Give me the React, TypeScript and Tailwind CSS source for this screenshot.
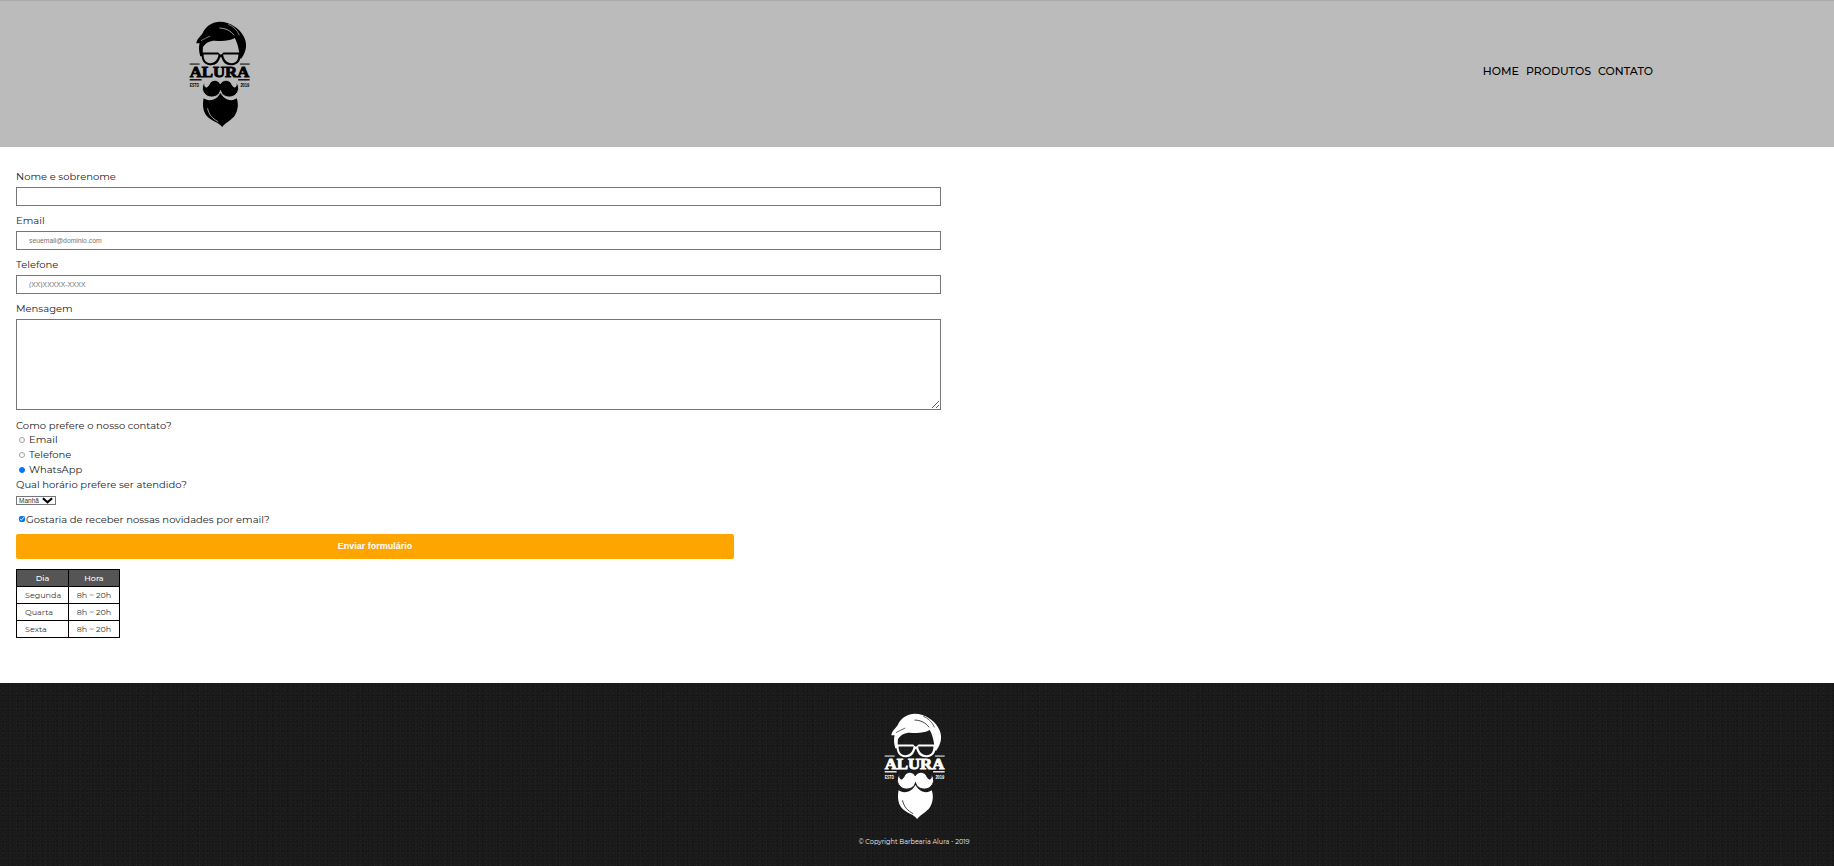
const font = "font-['Montserrat','Inter','Noto_Sans',sans-serif]";

function Logo({ color, gap, className }: { color: string; gap: string; className: string }) {
  return (
    <svg viewBox="55 60 190 325" className={className} fill={color}>
      {/* hair */}
      <path d="M80 130 C82 116 92 110 100 98 C106 84 118 72 136 67 C156 62 178 68 196 80 C214 92 228 110 230 132 C231 150 224 164 216 176 L211 176 C210 158 207 134 196 114 C178 124 156 124 136 122 C120 122 106 130 100 142 L99 168 L92 168 C88 156 87 142 90 130 Z" />
      {/* hair highlights */}
      <path fill="none" stroke={gap} strokeWidth="2.5" d="M150 84 C168 84 184 92 194 106" />
      <path fill="none" stroke={gap} strokeWidth="2" d="M176 72 C190 78 204 90 210 106" />
      <path fill="none" stroke={gap} strokeWidth="2" d="M94 122 C102 116 112 114 122 108" />
      {/* glasses */}
      <path fillRule="evenodd" d="M92 158 H146 L152 164 H156 L162 158 H214 V169 C212 184 205 195 188 196 C170 197 160 188 156 172 H152 C148 188 138 197 122 196 C105 195 98 184 96 169 H92 Z M102 164 C102 180 108 190 122 190 C136 190 145 180 147 164 Z M161 164 C163 180 172 190 187 190 C201 190 207 180 207 164 Z" />
      {/* top rules */}
      <rect x="60" y="191" width="30" height="3" />
      <rect x="212" y="191" width="29" height="3" />
      {/* lower rules */}
      <rect x="60" y="238" width="36" height="4" />
      <rect x="206" y="238" width="35" height="4" />
      <text x="150" y="233" textAnchor="middle" stroke={color} strokeWidth="2.5" fontFamily="'Liberation Serif',serif" fontWeight="700" fontSize="46" textLength="180" lengthAdjust="spacingAndGlyphs">ALURA</text>
      <text x="60" y="262" fontFamily="'Liberation Sans',sans-serif" fontWeight="700" fontSize="14" textLength="28" lengthAdjust="spacingAndGlyphs">ESTD</text>
      <text x="213" y="262" fontFamily="'Liberation Sans',sans-serif" fontWeight="700" fontSize="14" textLength="27" lengthAdjust="spacingAndGlyphs">2019</text>
      {/* beard */}
      <path d="M102 296 C98 318 100 340 116 354 C130 366 146 368 158 382 C170 368 186 362 196 348 C206 332 208 314 202 296 C192 304 176 304 162 292 C158 288 155 284 153 280 C150 284 148 288 144 292 C130 304 112 304 102 296 Z" />
      {/* moustache */}
      <path stroke={gap} strokeWidth="3" d="M152 252 C146 240 132 238 122 248 C118 254 116 262 110 262 C106 262 104 256 106 248 C98 254 96 268 102 278 C110 292 128 296 142 288 C148 284 152 278 153 272 C154 278 158 284 164 288 C178 296 196 292 204 278 C210 268 208 254 200 248 C202 256 200 262 196 262 C190 262 188 254 184 248 C174 238 160 240 152 252 Z" />
      {/* beard highlight */}
      <path fill="none" stroke={gap} strokeWidth="2.5" d="M114 326 C118 346 130 358 146 366" />
    </svg>
  );
}

function Label({ children }: { children: React.ReactNode }) {
  return <label className="block h-[19px] text-[10px] leading-[21px] text-[#222]">{children}</label>;
}

const fieldClass = "block w-[925px] border border-[#767676] bg-white px-[12px] text-[6.8px] font-['Liberation_Sans',sans-serif] placeholder:text-[#757575] outline-none";

const radioClass = "ml-[3px] h-[6px] w-[6px] appearance-none rounded-full border border-[#a0a0a0] bg-white checked:border-[#0075ff] checked:bg-[#0075ff]";

export default function App() {
  return (
    <div className={`${font} h-[866px] overflow-hidden bg-white`}>
      <header className="flex h-[147px] items-center justify-between border-t border-[#aaa] bg-[#bbbbbb] pl-[188px] pr-[181px]">
        <Logo color="#000" gap="#bbbbbb" className="h-[108px] w-[63px]" />
        <nav className="mb-[6px] flex gap-[7px] text-[11px] font-medium text-black">
          <a>HOME</a>
          <a>PRODUTOS</a>
          <a>CONTATO</a>
        </nav>
      </header>

      <main className="h-[536px] px-4 pt-[19px]">
        <form>
          <Label>Nome e sobrenome</Label>
          <input className={`${fieldClass} mt-[2px] h-[19px]`} />
          <div className="h-[4px]" />
          <Label>Email</Label>
          <input className={`${fieldClass} mt-[2px] h-[19px]`} placeholder="seuemail@dominio.com" />
          <div className="h-[4px]" />
          <Label>Telefone</Label>
          <input className={`${fieldClass} mt-[2px] h-[19px]`} placeholder="(XX)XXXXX-XXXX" />
          <div className="h-[4px]" />
          <Label>Mensagem</Label>
          <textarea className={`${fieldClass} mt-[2px] h-[91px] resize-y`} />
          <div className="mt-[8px] text-[10px] leading-[15px] text-[#222]">
            <div className="h-[14px]">Como prefere o nosso contato?</div>
            <label className="flex h-[15px] items-center"><input type="radio" name="c" className={radioClass} /><span className="ml-[4px]">Email</span></label>
            <label className="flex h-[15px] items-center"><input type="radio" name="c" className={radioClass} /><span className="ml-[4px]">Telefone</span></label>
            <label className="flex h-[15px] items-center"><input type="radio" name="c" defaultChecked className={radioClass} /><span className="ml-[4px]">WhatsApp</span></label>
            <div>Qual horário prefere ser atendido?</div>
          </div>
          <div className="relative mt-[4px] h-[9px] w-[40px]">
            <select className="block h-full w-full appearance-none border border-[#767676] bg-white pl-[2px] font-['Liberation_Sans',sans-serif] text-[6.5px] leading-[7px] text-[#333] outline-none">
              <option>Manhã</option>
            </select>
            <svg viewBox="0 0 12 7" className="pointer-events-none absolute right-[3px] top-[1px] h-[7px] w-[11px]" fill="none" stroke="#000" strokeWidth="2.4">
              <path d="M1 1 L6 5.5 L11 1" />
            </svg>
          </div>
          <label className="mt-[6px] flex h-[16px] items-center text-[10px] text-[#222]">
            <input type="checkbox" defaultChecked className="ml-[3px] mr-[1px] h-[6px] w-[6px] accent-[#0075ff]" />
            <span>Gostaria de receber nossas novidades por email?</span>
          </label>
          <button type="button" className="mt-[7px] block h-[25px] w-[718px] rounded-[2px] bg-[#ffa500] font-['Liberation_Sans',sans-serif] text-[9px] font-bold text-white">
            Enviar formulário
          </button>
        </form>

        <table className="mt-[10px] border-collapse border border-black text-[8px] text-[#333]">
          <thead>
            <tr className="h-[17px] bg-[#555] text-white">
              <th className="w-[52px] border border-black font-medium">Dia</th>
              <th className="w-[51px] border border-black font-medium">Hora</th>
            </tr>
          </thead>
          <tbody>
            {["Segunda", "Quarta", "Sexta"].map((d) => (
              <tr key={d} className="h-[17px]">
                <td className="border border-black pl-[8px]">{d}</td>
                <td className="border border-black text-center">8h ~ 20h</td>
              </tr>
            ))}
          </tbody>
        </table>
      </main>

      <footer className="flex h-[183px] flex-col items-center bg-[#1a1a1a] bg-[radial-gradient(#212121_1px,transparent_1px),radial-gradient(#141414_1px,transparent_1px),radial-gradient(#1f1f1f_1px,transparent_1px)] bg-[length:3px_3px,5px_5px,7px_4px] pr-[6px] pt-[29px]">
        <Logo color="#fff" gap="#1a1a1a" className="h-[108px] w-[63px]" />
        <p className="mt-[18px] text-[6.5px] text-[#eee]">© Copyright Barbearia Alura - 2019</p>
      </footer>
    </div>
  );
}
